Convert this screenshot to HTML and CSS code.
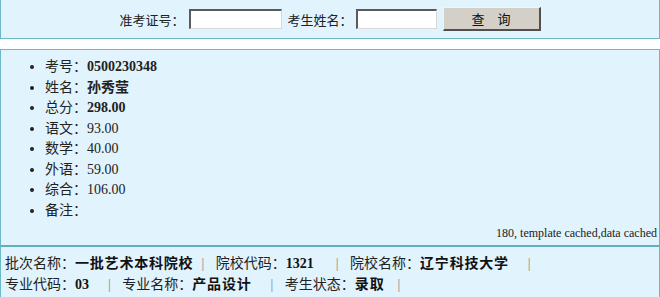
FILE: index.html
```html
<!DOCTYPE html>
<html lang="zh-CN">
<head>
    <meta charset="UTF-8">
    <meta name="viewport" content="width=device-width, initial-scale=1.0">
    <title>成绩查询</title>
    <link rel="stylesheet" href="styles.css">
</head>
<body>
    <div class="search">
        <form class="search-form">
            <label for="examNo">准考证号：</label>
            <input id="examNo" class="field field-id" type="text">
            <label for="examName">考生姓名：</label>
            <input id="examName" class="field field-name" type="text">
            <button type="button" class="btn">查　询</button>
        </form>
    </div>

    <div class="result">
        <ul class="score-list">
            <li>考号：<b>0500230348</b></li>
            <li>姓名：<b>孙秀莹</b></li>
            <li>总分：<b>298.00</b></li>
            <li>语文：93.00</li>
            <li>数学：40.00</li>
            <li>外语：59.00</li>
            <li>综合：106.00</li>
            <li>备注：</li>
        </ul>
        <div class="note">180, template cached,data cached</div>
    </div>

    <div class="admit">
        <div class="admit-row">
            批次名称：<b class="wide">一批艺术本科院校</b><span class="sep">|</span>
            院校代码：<b class="tail-l">1321</b><span class="sep">|</span>
            院校名称：<b class="wide tail-m">辽宁科技大学</b><span class="sep">|</span>
        </div>
        <div class="admit-row">
            专业代码：<b class="tail-m">03</b><span class="sep">|</span>
            专业名称：<b class="wide tail-m">产品设计</b><span class="sep">|</span>
            考生状态：<b class="wide tail-s">录取</b><span class="sep">|</span>
        </div>
    </div>
</body>
</html>
```

FILE: styles.css
```css
body {
    margin: 0;
    font-family: "Liberation Serif", "Noto Sans CJK SC", serif;
    font-size: 14px;
    color: #222;
    background: #fff;
}

.search,
.result,
.admit {
    background: #e1f3fc;
    border: 1px solid #6cb8c8;
}

/* top search bar */
.search {
    border-top: 0;
    height: 38px;
    margin-bottom: 10px;
}

.search-form {
    height: 38px;
    display: flex;
    align-items: center;
    justify-content: center;
    font-family: "Noto Sans CJK SC", sans-serif;
    font-size: 13px;
}

.field {
    box-sizing: border-box;
    height: 20px;
    margin: 0 6px 0 4px;
    padding: 0 2px;
    background: #fff;
    border-style: solid;
    border-width: 2px 1px 1px 2px;
    border-color: #5a5a5a #d8d8d8 #d8d8d8 #5a5a5a;
}

.field-id {
    width: 93px;
}

.field-name {
    width: 81px;
    margin-left: 3px;
}

.btn {
    box-sizing: border-box;
    width: 98px;
    height: 24px;
    padding: 0;
    font-family: "Noto Sans CJK SC", sans-serif;
    font-size: 13px;
    color: #111;
    background: #d4d0c8;
    border-style: solid;
    border-width: 1px 2px 2px 1px;
    border-color: #f4f4f4 #505050 #505050 #f4f4f4;
    cursor: pointer;
}

/* score list */
.result {
    padding: 0 2px 5px 4px;
    border-bottom-color: #5fb1c1;
}

.score-list {
    margin: 7px 0 0;
    padding-left: 40px;
    line-height: 20.5px;
}

.note {
    margin-top: 5px;
    text-align: right;
    font-size: 12px;
    line-height: 14px;
}

/* admission info */
.admit {
    border-bottom: 0;
    border-top: 1px solid #5fb1c1;
    padding: 6px 4px 4px;
    line-height: 21px;
}

.admit b {
    color: #111;
}

.admit .wide {
    letter-spacing: 0.8px;
}

.sep {
    margin: 0 8px;
    color: #888;
}

.tail-s {
    padding-right: 5px;
}

.tail-m {
    padding-right: 11px;
}

.tail-l {
    padding-right: 14px;
}
```
